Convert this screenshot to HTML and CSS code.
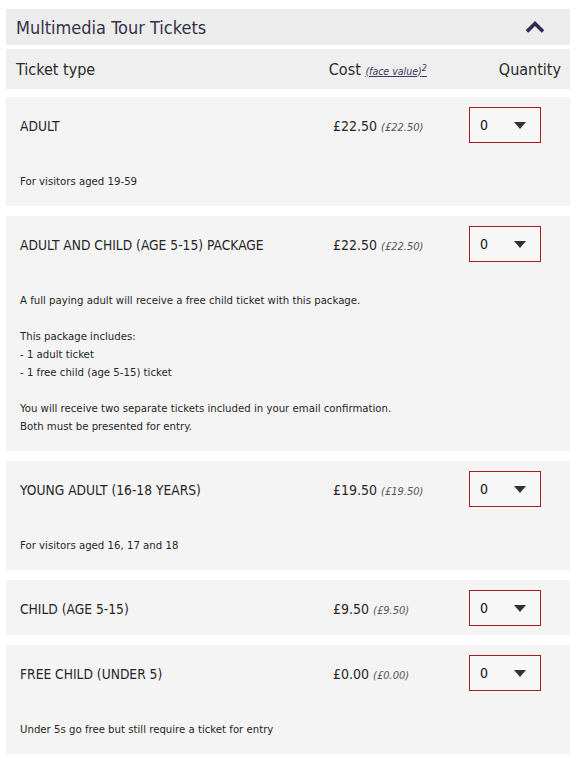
FILE: index.html
```html
<!DOCTYPE html>
<html lang="en">
<head>
<meta charset="utf-8">
<title>Multimedia Tour Tickets</title>
<link rel="stylesheet" href="styles.css">
</head>
<body>
<div class="panel">
  <div class="panel-head">
    <h2 class="panel-title">Multimedia Tour Tickets</h2>
    <svg class="chevron" width="20" height="14" viewBox="0 0 20 14"><polyline points="2,11.5 10,3.5 18,11.5" fill="none" stroke="#2f2b4d" stroke-width="3.6"/></svg>
  </div>
  <div class="col-head">
    <span class="col-type">Ticket type</span>
    <span class="col-cost">Cost <a class="face" href="#">(face value)<sup>2</sup></a></span>
    <span class="col-qty">Quantity</span>
  </div>

  <div class="card">
    <div class="row">
      <span class="name">ADULT</span>
      <span class="cost">£22.50 <i>(£22.50)</i></span>
      <div class="select"><span>0</span><span class="tri"></span></div>
    </div>
    <div class="desc">For visitors aged 19-59</div>
  </div>

  <div class="card">
    <div class="row">
      <span class="name">ADULT AND CHILD (AGE 5-15) PACKAGE</span>
      <span class="cost">£22.50 <i>(£22.50)</i></span>
      <div class="select"><span>0</span><span class="tri"></span></div>
    </div>
    <div class="desc">A full paying adult will receive a free child ticket with this package.<br><br>This package includes:<br>- 1 adult ticket<br>- 1 free child (age 5-15) ticket<br><br>You will receive two separate tickets included in your email confirmation.<br>Both must be presented for entry.</div>
  </div>

  <div class="card">
    <div class="row">
      <span class="name">YOUNG ADULT (16-18 YEARS)</span>
      <span class="cost">£19.50 <i>(£19.50)</i></span>
      <div class="select"><span>0</span><span class="tri"></span></div>
    </div>
    <div class="desc">For visitors aged 16, 17 and 18</div>
  </div>

  <div class="card">
    <div class="row">
      <span class="name">CHILD (AGE 5-15)</span>
      <span class="cost">£9.50 <i>(£9.50)</i></span>
      <div class="select"><span>0</span><span class="tri"></span></div>
    </div>
  </div>

  <div class="card">
    <div class="row">
      <span class="name">FREE CHILD (UNDER 5)</span>
      <span class="cost">£0.00 <i>(£0.00)</i></span>
      <div class="select"><span>0</span><span class="tri"></span></div>
    </div>
    <div class="desc">Under 5s go free but still require a ticket for entry</div>
  </div>
</div>
</body>
</html>
```
FILE: styles.css
```css
* { box-sizing: border-box; }
html, body { margin: 0; padding: 0; background: #fff; }
body {
  font-family: "DejaVu Sans Condensed", "DejaVu Sans", sans-serif;
  color: #222;
}
.panel {
  margin: 9px 7px 0 6px;
  display: flex;
  flex-direction: column;
}
.panel-head {
  height: 36px;
  background: #ececec;
  display: flex;
  align-items: center;
  justify-content: space-between;
  padding: 0 25px 0 10px;
}
.panel-title {
  margin: 0;
  font-weight: normal;
  font-size: 18px;
  color: #34324a;
}
.chevron { display: block; }
.col-head {
  margin-top: 4px;
  height: 40px;
  background: #efefef;
  display: flex;
  align-items: center;
  padding: 0 9px 0 10px;
  font-size: 16px;
  color: #2a2a2a;
}
.col-type { flex: 1; }
.col-cost { width: 170px; }
.face {
  font-style: italic;
  font-size: 10.5px;
  color: #3b3a5e;
  text-decoration: underline;
}
.face sup { font-size: 9px; }
.col-qty { text-align: right; }
.card {
  margin-top: 8px;
  background: #f4f4f4;
  padding: 10px 29px 9px 14px;
}
.card + .card { margin-top: 10px; }
.row {
  display: flex;
  align-items: center;
  height: 36px;
}
.name { flex: 1; font-size: 13.7px; color: #262626; padding-top: 2px; }
.cost { width: 136px; font-size: 14px; color: #262626; padding-top: 2px; }
.cost i { font-size: 11px; color: #555; }
.select {
  width: 72px;
  height: 36px;
  border: 1px solid #a61e22;
  background: #f7f7f7;
  display: flex;
  align-items: center;
  justify-content: space-between;
  padding: 0 14px 0 10px;
  font-size: 14px;
  color: #111;
}
.tri {
  width: 0;
  height: 0;
  border-left: 6.5px solid transparent;
  border-right: 6.5px solid transparent;
  border-top: 7px solid #333;
}
.desc {
  margin: 30px 0 6px;
  font-size: 11.3px;
  line-height: 18px;
  color: #262626;
}
```
